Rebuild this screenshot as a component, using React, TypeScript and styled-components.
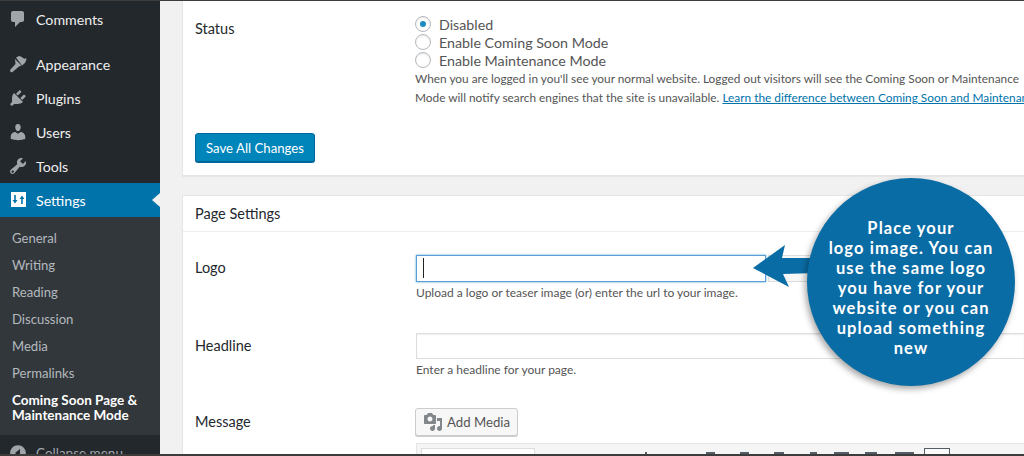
import React from "react";
import styled, { createGlobalStyle } from "styled-components";

const GlobalStyle = createGlobalStyle`
  html, body {
    margin: 0;
    padding: 0;
    width: 1024px;
    height: 456px;
    overflow: hidden;
    background: #f1f1f1;
    font-family: "Lato", "Noto Sans", sans-serif;
  }
`;

const Page = styled.div`
  position: relative;
  display: flex;
  width: 1024px;
  height: 456px;
  overflow: hidden;
  border-top: 1px solid #3c3c3c;
  border-bottom: 2px solid #3c3c3c;
  box-sizing: border-box;
`;

const Sidebar = styled.nav`
  display: flex;
  flex-direction: column;
  flex: 0 0 160px;
  background: #23282d;
`;

const TopMenu = styled.div`
  display: flex;
  flex-direction: column;
  padding-top: 1px;
`;

const MenuItem = styled.div<{ $active?: boolean; $gap?: number }>`
  position: relative;
  display: flex;
  align-items: center;
  height: 34px;
  margin-bottom: ${(p) => p.$gap ?? 0}px;
  padding-left: 8px;
  gap: 8px;
  font-size: 14.2px;
  color: ${(p) => (p.$active ? "#fff" : "#eee")};
  background: ${(p) => (p.$active ? "#0073aa" : "transparent")};
`;

const MenuIcon = styled.svg<{ $active?: boolean }>`
  flex: none;
  width: 20px;
  height: 20px;
  fill: ${(p) => (p.$active ? "#fff" : "#a0a5aa")};
`;

const ActiveNotch = styled.span`
  position: absolute;
  right: 0;
  top: 10px;
  border-top: 7px solid transparent;
  border-bottom: 7px solid transparent;
  border-right: 8px solid #f1f1f1;
`;

const SubMenu = styled.div`
  display: flex;
  flex-direction: column;
  flex: 0 0 218px;
  box-sizing: border-box;
  padding: 8px 0 0 12px;
  background: #32373c;
`;

const SubItem = styled.div<{ $current?: boolean }>`
  font-size: ${(p) => (p.$current ? 13.5 : 13.1)}px;
  line-height: 15px;
  padding: 6px 0;
  color: ${(p) => (p.$current ? "#fff" : "#b4b9be")};
  font-weight: ${(p) => (p.$current ? 700 : 400)};
`;

const Collapse = styled.div`
  display: flex;
  align-items: center;
  flex: none;
  gap: 8px;
  height: 20px;
  padding: 8px 0 0 8px;
  font-size: 13.5px;
  color: #a0a5aa;
`;

const CollapseIcon = styled.svg`
  flex: none;
  width: 20px;
  height: 20px;
  fill: #a0a5aa;
`;

const Main = styled.main`
  display: flex;
  flex-direction: column;
  flex: 1;
  min-width: 0;
  padding-left: 22px;
  gap: 19px;
`;

const Panel = styled.section`
  background: #fff;
  border: 1px solid #e5e5e5;
  border-right: none;
  box-shadow: 0 1px 1px rgba(0, 0, 0, 0.04);
`;

const TopPanel = styled(Panel)`
  flex: none;
  border-top: none;
  height: 175px;
  padding: 14px 0 0 12px;
  box-sizing: border-box;
`;

const Row = styled.div<{ $labelWidth: number; $top?: number }>`
  display: grid;
  grid-template-columns: ${(p) => p.$labelWidth}px minmax(0, 1fr);
  margin-top: ${(p) => p.$top ?? 0}px;
`;

const Label = styled.div<{ $line?: number; $top?: number }>`
  padding-top: ${(p) => p.$top ?? 0}px;
  font-size: 14.5px;
  line-height: ${(p) => p.$line ?? 26}px;
  color: #23282d;
`;

const Radio = styled.div`
  display: flex;
  align-items: center;
  gap: 8px;
  height: 18px;
  font-size: 14.25px;
  color: #555;
`;

const RadioDot = styled.span<{ $on?: boolean }>`
  box-sizing: border-box;
  display: flex;
  align-items: center;
  justify-content: center;
  width: 16px;
  height: 16px;
  border-radius: 50%;
  border: 1px solid #b4b9be;
  background: #fff;
  box-shadow: inset 0 1px 2px rgba(0, 0, 0, 0.1);
  &::after {
    content: "";
    display: ${(p) => (p.$on ? "block" : "none")};
    width: 6px;
    height: 6px;
    border-radius: 50%;
    background: #1e8cbe;
  }
`;

const Help = styled.p`
  margin: 0;
  font-size: 11.85px;
  line-height: 19px;
  color: #555;
  white-space: nowrap;
  overflow: hidden;
`;

const HelpLink = styled.a`
  color: #0073aa;
  text-decoration: underline;
`;

const SaveButton = styled.button`
  display: block;
  width: 120px;
  height: 29px;
  margin-top: 26px;
  padding: 0;
  font: 13.2px "Lato", "Noto Sans", sans-serif;
  color: #fff;
  background: #0085ba;
  border: 1px solid #006799;
  border-radius: 3px;
  box-shadow: 0 1px 0 #006799;
`;

const PanelTitle = styled.h2`
  margin: 0;
  padding: 0 12px;
  height: 35px;
  line-height: 36px;
  font-size: 14.5px;
  font-weight: 400;
  color: #23282d;
  border-bottom: 1px solid #eee;
`;

const PanelBody = styled.div`
  padding-left: 12px;
`;

const LogoField = styled.div`
  padding-top: 23px;
`;

const InputRow = styled.div`
  display: flex;
  gap: 2px;
`;

const TextInput = styled.div<{ $focus?: boolean }>`
  position: relative;
  box-sizing: border-box;
  flex: ${(p) => (p.$focus ? "0 0 350px" : "1")};
  height: ${(p) => (p.$focus ? 27 : 26)}px;
  background: #fff;
  border: 1px solid ${(p) => (p.$focus ? "#5b9dd9" : "#ddd")};
  border-right-width: ${(p) => (p.$focus ? 1 : 0)}px;
  box-shadow: ${(p) => (p.$focus ? "0 0 2px rgba(30, 140, 190, 0.8)" : "inset 0 1px 2px rgba(0, 0, 0, 0.07)")};
`;

const Caret = styled.span`
  position: absolute;
  left: 6px;
  top: 2px;
  width: 1px;
  height: 20px;
  background: #222;
`;

const UploadButton = styled.div`
  box-sizing: border-box;
  flex: 0 0 60px;
  height: 27px;
  background: #f7f7f7;
  border: 1px solid #ddd;
`;

const FieldHelp = styled(Help)`
  margin-top: 2px;
  font-size: 12px;
  line-height: 18px;
`;

const AddMedia = styled.button`
  display: flex;
  align-items: center;
  gap: 4px;
  box-sizing: border-box;
  width: 103px;
  height: 28px;
  margin-left: -1px;
  padding: 0 0 0 7px;
  font: 13.2px "Lato", "Noto Sans", sans-serif;
  color: #555;
  background: #f7f7f7;
  border: 1px solid #ccc;
  border-radius: 3px;
  box-shadow: 0 1px 0 #ccc;
`;

const MediaIcon = styled.svg`
  flex: none;
  width: 20px;
  height: 20px;
  fill: #82878c;
`;

const EditorBar = styled.div`
  display: flex;
  align-items: flex-start;
  height: 30px;
  margin-top: 7px;
  padding-left: 4px;
  background: #f5f5f5;
  border: 1px solid #e5e5e5;
  border-right: none;
`;

const FormatSelect = styled.div`
  flex: none;
  width: 112px;
  height: 24px;
  margin-top: 4px;
  background: #fff;
  border: 1px solid #ddd;
`;

const ToolGlyph = styled.span<{ $left: number; $width: number }>`
  flex: none;
  width: ${(p) => p.$width}px;
  height: 6px;
  margin-left: ${(p) => p.$left}px;
  margin-top: 8px;
  background: #555d66;
`;

const ToolBoxed = styled.span`
  flex: none;
  box-sizing: border-box;
  width: 26px;
  height: 20px;
  margin-left: 10px;
  margin-top: 4px;
  background: #fafafa;
  border: 1px solid #555d66;
`;

const Callout = styled.aside`
  position: absolute;
  left: 807px;
  top: 177px;
  display: flex;
  align-items: center;
  justify-content: center;
  box-sizing: border-box;
  width: 208px;
  height: 208px;
  padding-top: 12px;
  border-radius: 50%;
  background: #0a6ca5;
  box-shadow: -2px 3px 6px rgba(0, 0, 0, 0.35);
  color: #fff;
  font-family: "Lato", "Noto Sans", sans-serif;
  font-size: 16.5px;
  font-weight: 700;
  line-height: 20px;
  letter-spacing: 1.1px;
  text-align: center;
`;

const CalloutArrow = styled.svg`
  position: absolute;
  left: 750px;
  top: 243px;
  width: 70px;
  height: 44px;
  fill: #0a6ca5;
`;

const icons: Record<string, string> = {
  Appearance:
    "M8 3.500L11 2c1.500.2 3 .9 4 2 1 .9 2.200.8 3.500.2-.2 2-.8 3.800-1.800 5L14 11.500zM7 5l6.500 6.500-2.500 1-6.500 5.500c-1.500.8-3 -.6-2.200-2.200L7.500 10z",
  Plugins:
    "M13.110 4.360L9.870 7.600 8 5.730l3.240-3.240c.35-.34 1.050-.2 1.560.32.520.51.660 1.210.310 1.550zm-8 1.770l.910-1.120 9.010 9.010-1.190.840c-.710.710-2.630 1.160-3.820 1.160H6.140L4.900 17.260c-.59.59-1.540.59-2.120 0-.59-.58-.59-1.530 0-2.120l1.240-1.240v-3.880c0-1.130.4-3.190 1.090-3.890zm7.260 3.970l3.240-3.240c.34-.35 1.040-.21 1.550.31.520.51.660 1.210.310 1.550l-3.240 3.250z",
  Users:
    "M10 9.250c-2.270 0-2.730-3.440-2.730-3.440C7 4.020 7.820 2 9.970 2c2.160 0 2.980 2.020 2.710 3.810 0 0-.41 3.440-2.680 3.440zm0 2.570L12.720 10c2.390 0 4.520 2.330 4.520 4.530v2.490s-3.650 1.130-7.240 1.130c-3.650 0-7.240-1.130-7.240-1.130v-2.490c0-2.250 1.940-4.480 4.460-4.480z",
  Tools:
    "M16.680 9.770c-1.340 1.340-3.300 1.670-4.950.990l-5.410 6.520c-.99.990-2.590.990-3.570 0-.99-.98-.99-2.580 0-3.570l6.520-5.420c-.68-1.650-.35-3.610.99-4.950 1.280-1.280 3.120-1.620 4.720-1.060l-2.890 2.890 2.820 2.820 2.890-2.890c.56 1.600.22 3.440-1.060 4.720zM3.810 16.560c.48.48 1.260.48 1.740 0s.48-1.260 0-1.740-1.260-.48-1.740 0-.48 1.260 0 1.740z",
};

const subItems = ["General", "Writing", "Reading", "Discussion", "Media", "Permalinks"];

const toolGlyphs = [
  { left: 110, width: 2 },
  { left: 59, width: 9 },
  { left: 25, width: 9 },
  { left: 25, width: 10 },
  { left: 26, width: 7 },
  { left: 17, width: 15 },
  { left: 16, width: 12 },
  { left: 18, width: 19 },
];

export default function App() {
  return (
    <Page>
      <GlobalStyle />
      <Sidebar>
        <TopMenu>
          <MenuItem $gap={11}>
            <MenuIcon viewBox="0 0 20 20">
              <path d="M5 2h9c1.100 0 2 .9 2 2v7c0 1.100-.9 2-2 2h-2l-5 5v-5H5c-1.100 0-2-.9-2-2V4c0-1.100.9-2 2-2z" />
            </MenuIcon>
            Comments
          </MenuItem>
          {Object.keys(icons).map((label) => (
            <MenuItem key={label}>
              <MenuIcon viewBox="0 0 20 20">
                <path d={icons[label]} />
              </MenuIcon>
              {label}
            </MenuItem>
          ))}
          <MenuItem $active>
            <MenuIcon $active viewBox="0 0 20 20">
              <path
                fillRule="evenodd"
                d="M3 2h15v15H3zM6.200 5v5H4.500l2.500 3.500L9.500 10H7.800V5zM13.200 14V9h-1.700L14 5.500 16.500 9h-1.700v5z"
              />
            </MenuIcon>
            Settings
            <ActiveNotch />
          </MenuItem>
        </TopMenu>
        <SubMenu>
          {subItems.map((s) => (
            <SubItem key={s}>{s}</SubItem>
          ))}
          <SubItem $current>
            Coming Soon Page &amp;
            <br />
            Maintenance Mode
          </SubItem>
        </SubMenu>
        <Collapse>
          <CollapseIcon viewBox="0 0 20 20">
            <path
              fillRule="evenodd"
              d="M10 2.160c4.330 0 7.840 3.510 7.840 7.840s-3.510 7.840-7.840 7.840S2.160 14.330 2.160 10 5.670 2.160 10 2.160zM12 14V6l-5 4z"
            />
          </CollapseIcon>
          Collapse menu
        </Collapse>
      </Sidebar>
      <Main>
        <TopPanel>
          <Row $labelWidth={220}>
            <Label $top={1}>Status</Label>
            <div>
              <Radio>
                <RadioDot $on />
                Disabled
              </Radio>
              <Radio>
                <RadioDot />
                Enable Coming Soon Mode
              </Radio>
              <Radio>
                <RadioDot />
                Enable Maintenance Mode
              </Radio>
              <Help>
                When you are logged in you'll see your normal website. Logged out visitors will see the Coming Soon or Maintenance
              </Help>
              <Help>
                Mode will notify search engines that the site is unavailable.{" "}
                <HelpLink>Learn the difference between Coming Soon and Maintenance</HelpLink>
              </Help>
            </div>
          </Row>
          <SaveButton>Save All Changes</SaveButton>
        </TopPanel>
        <Panel>
          <PanelTitle>Page Settings</PanelTitle>
          <PanelBody>
            <Row $labelWidth={221}>
              <Label $top={23}>Logo</Label>
              <LogoField>
                <InputRow>
                  <TextInput $focus>
                    <Caret />
                  </TextInput>
                  <UploadButton />
                </InputRow>
                <FieldHelp>Upload a logo or teaser image (or) enter the url to your image.</FieldHelp>
              </LogoField>
            </Row>
            <Row $labelWidth={221} $top={31}>
              <Label>Headline</Label>
              <div>
                <InputRow>
                  <TextInput />
                </InputRow>
                <FieldHelp>Enter a headline for your page.</FieldHelp>
              </div>
            </Row>
            <Row $labelWidth={221} $top={29}>
              <Label $line={28}>Message</Label>
              <div>
                <AddMedia>
                  <MediaIcon viewBox="0 0 20 20">
                    <path
                      fillRule="evenodd"
                      d="M13 11V4c0-.55-.45-1-1-1h-1.670L9 1H5L3.670 3H2c-.55 0-1 .45-1 1v7c0 .55.45 1 1 1h10c.55 0 1-.45 1-1zM7 4.500c1.380 0 2.500 1.120 2.500 2.500S8.380 9.500 7 9.500 4.500 8.380 4.500 7 5.620 4.500 7 4.500zM14 6h5v10.500c0 1.380-1.120 2.500-2.500 2.500S14 17.880 14 16.500s1.120-2.500 2.500-2.500c.17 0 .34.020.5.050V9h-3V6zm-4 8.050V13h2v3.500c0 1.380-1.120 2.500-2.500 2.500S7 17.880 7 16.500 8.120 14 9.500 14c.17 0 .34.020.5.050z"
                    />
                  </MediaIcon>
                  Add Media
                </AddMedia>
                <EditorBar>
                  <FormatSelect />
                  {toolGlyphs.map((g, i) => (
                    <ToolGlyph key={i} $left={g.left} $width={g.width} />
                  ))}
                  <ToolBoxed />
                </EditorBar>
              </div>
            </Row>
          </PanelBody>
        </Panel>
      </Main>
      <CalloutArrow viewBox="0 0 70 44">
        <path d="M3 24 L35 1 L32 14 L66 14 L66 29 L33 30 L39 43 Z" />
      </CalloutArrow>
      <Callout>
        <div>
          Place your
          <br />
          logo image. You can
          <br />
          use the same logo
          <br />
          you have for your
          <br />
          website or you can
          <br />
          upload something
          <br />
          new
        </div>
      </Callout>
    </Page>
  );
}
